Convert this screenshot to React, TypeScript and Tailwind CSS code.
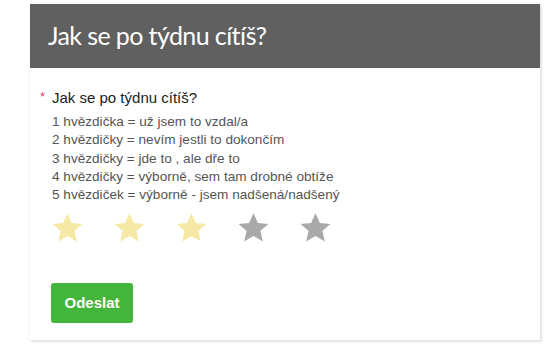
const legend = [
  "1 hvězdička = už jsem to vzdal/a",
  "2 hvězdičky = nevím jestli to dokončím",
  "3 hvězdičky = jde to , ale dře to",
  "4 hvězdičky = výborně, sem tam drobné obtíže",
  "5 hvězdiček = výborně - jsem nadšená/nadšený",
];

function StarIcon({ filled }: { filled: boolean }) {
  return (
    <svg viewBox="0 0 24 24" className="w-[33px] h-[33px]">
      <path
        d="M12 1.6l3.2 7.1 7.6.7-5.8 5.1 1.8 7.6L12 18.1l-6.8 4 1.8-7.6-5.8-5.1 7.6-.7z"
        fill={filled ? "#f6e9a6" : "#a9a9a9"}
      />
    </svg>
  );
}

export default function App() {
  const rating = 3;
  return (
    <div className="w-[560px] h-[352px] bg-white pt-1 pl-[30px] font-['Liberation_Sans',Arial,sans-serif]">
      <div className="w-[510px] bg-white shadow-[1px_1px_3px_rgba(0,0,0,0.2)]">
        {/* Header */}
        <div className="h-[64px] bg-[#606060] flex items-center px-[18px]">
          <h1 className="text-white text-[25px] font-['Lato',sans-serif] tracking-[-0.6px]">Jak se po týdnu cítíš?</h1>
        </div>

        {/* Body */}
        <div className="pt-[20px] pl-[10px] pb-[17px]">
          <div className="flex items-start">
            <span className="text-[#e0457b] text-[13px] leading-none mt-[2px] w-[12px]">*</span>
            <span className="text-[15px] text-[#222] leading-[20px]">Jak se po týdnu cítíš?</span>
          </div>
          <div className="pl-[12px] mt-[5px]">
            {legend.map((line) => (
              <p key={line} className="text-[13.6px] text-[#555] leading-[18.3px]">{line}</p>
            ))}
          </div>

          <div className="flex items-center gap-[29px] pl-[11px] mt-[7px]">
            {[1, 2, 3, 4, 5].map((i) => (
              <StarIcon key={i} filled={i <= rating} />
            ))}
          </div>

          <button
            type="button"
            className="ml-[11px] mt-[39px] w-[82px] h-[40px] rounded-[3px] bg-[#44b53b] text-white font-bold text-[15px]"
          >
            Odeslat
          </button>
        </div>
      </div>
    </div>
  );
}
